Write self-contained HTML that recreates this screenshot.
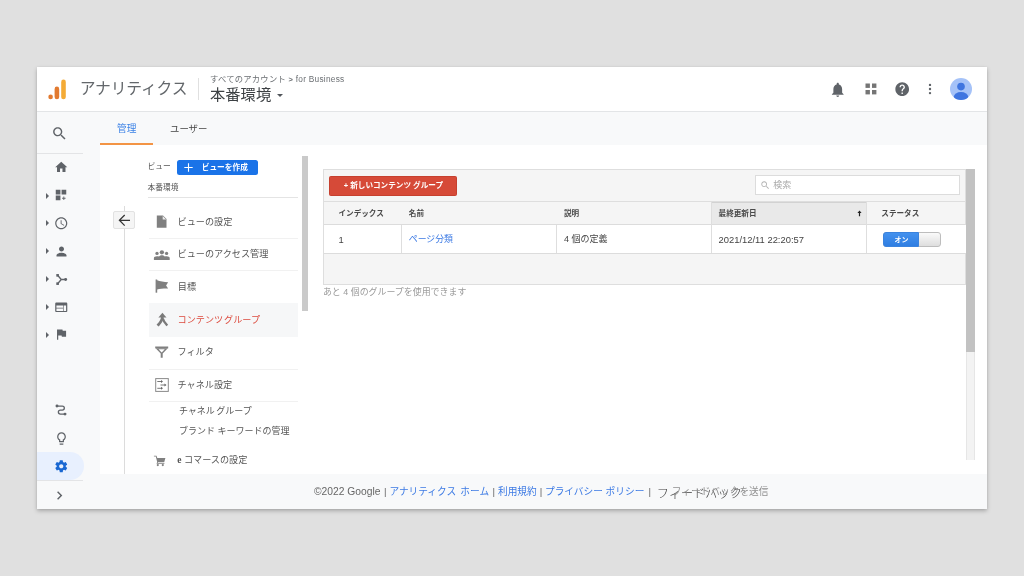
<!DOCTYPE html>
<html lang="ja">
<head>
<meta charset="utf-8">
<title>アナリティクス</title>
<style>
*{box-sizing:border-box;margin:0;padding:0}
html,body{width:1024px;height:576px;overflow:hidden;background:#e0e0e0;font-family:"Liberation Sans","Noto Sans CJK JP",sans-serif;color:#444}
.abs{position:absolute}
#win{position:absolute;left:37px;top:67px;width:950px;height:441.5px;background:#f8f9fa;box-shadow:0 2px 4px rgba(0,0,0,.25),0 0 2px rgba(0,0,0,.05);overflow:hidden}
#hdr{position:absolute;left:0;top:0;width:950px;height:45px;background:#fff;border-bottom:1px solid #e3e5e7}
#panel{position:absolute;left:63px;top:78px;width:887px;height:329px;background:#fff}
#foot{position:absolute;left:0;top:407px;width:950px;height:34px;background:#f8f9fa}
svg{position:absolute;display:block}
.t{position:absolute;white-space:nowrap;line-height:1;will-change:opacity}
</style>
</head>
<body>
<div id="win">
  <div id="hdr">
    <svg style="left:9.700px;top:11px" width="22" height="23" viewBox="0 0 22 23">
      <rect x="14.2" y="1.6" width="4.6" height="19.6" rx="2.3" fill="#f4ab36"/>
      <rect x="7.6" y="8.6" width="4.6" height="12.6" rx="2.3" fill="#e27a30"/>
      <circle cx="3.6" cy="18.9" r="2.3" fill="#e27a30"/>
    </svg>
    <div class="t" style="left:42.800px;top:14.400px;font-size:15.800px;color:#63676b;letter-spacing:-.2px">アナリティクス</div>
    <div class="abs" style="left:161px;top:11px;width:1px;height:22px;background:#e0e0e0"></div>
    <div class="t" style="left:173px;top:8px;font-size:8.300px;color:#6a6e72;letter-spacing:.25px">すべてのアカウント <b style="font-size:7.5px">&gt;</b> for Business</div>
    <div class="t" style="left:173px;top:20px;font-size:15.300px;color:#3c4043">本番環境</div>
    <div class="abs" style="left:240px;top:26.500px;width:0;height:0;border-left:3.400px solid transparent;border-right:3.400px solid transparent;border-top:3.600px solid #50545a"></div>
    <svg style="left:792px;top:13.5px" width="17.5" height="17.5" viewBox="0 0 24 24"><path fill="#5f6368" d="M12 22c1.1 0 2-.9 2-2h-4c0 1.1.89 2 2 2zm6-6v-5c0-3.07-1.64-5.64-4.5-6.32V4c0-.83-.67-1.5-1.5-1.5s-1.5.67-1.5 1.5v.68C7.63 5.36 6 7.92 6 11v5l-2 2v1h16v-1l-2-2z"/></svg>
    <svg style="left:828.400px;top:16.200px" width="12" height="12" viewBox="0 0 12 12"><g fill="#757575"><rect x="0.5" y="0.5" width="4.4" height="4.4"/><rect x="7" y="0.5" width="4.4" height="4.4"/><rect x="0.5" y="7" width="4.4" height="4.4"/><rect x="7" y="7" width="4.4" height="4.4"/></g></svg>
    <svg style="left:857px;top:14px" width="16.4" height="16.4" viewBox="0 0 24 24"><path fill="#5f6368" d="M12 2C6.48 2 2 6.48 2 12s4.480 10 10 10 10-4.480 10-10S17.520 2 12 2zm1 17h-2v-2h2v2zm2.070-7.750l-.9.920C13.450 12.900 13 13.500 13 15h-2v-.5c0-1.100.450-2.100 1.170-2.830l1.240-1.260c.370-.360.590-.860.590-1.410 0-1.100-.9-2-2-2s-2 .9-2 2H8c0-2.210 1.790-4 4-4s4 1.790 4 4c0 .880-.360 1.680-.930 2.250z"/></svg>
    <svg style="left:890px;top:15px" width="6" height="14" viewBox="0 0 6 14"><g fill="#5f6368"><circle cx="3" cy="2.900" r="1.2"/><circle cx="3" cy="7" r="1.2"/><circle cx="3" cy="11.100" r="1.2"/></g></svg>
    <svg style="left:912.500px;top:11.300px" width="22" height="22" viewBox="0 0 23 23"><defs><clipPath id="av"><circle cx="11.500" cy="11.500" r="11.500"/></clipPath></defs><circle cx="11.500" cy="11.500" r="11.500" fill="#a5c2f8"/><g clip-path="url(#av)" fill="#3f75e0"><circle cx="11.500" cy="9" r="4"/><ellipse cx="11.500" cy="19.500" rx="7.500" ry="4.800"/></g></svg>
  </div>
  <div id="nav" style="position:absolute;left:0;top:0;z-index:3">
  <svg style="left:14.0px;top:57.5px" width="17" height="17" viewBox="0 0 24 24"><path fill="#5f6368" d="M15.5 14h-.79l-.28-.27C15.41 12.59 16 11.11 16 9.5 16 5.91 13.09 3 9.5 3S3 5.91 3 9.5 5.91 16 9.5 16c1.61 0 3.09-.59 4.23-1.57l.27.28v.79l5 4.99L20.49 19l-4.99-5zm-6 0C7.010 14 5 11.990 5 9.500S7.010 5 9.500 5 14 7.010 14 9.500 11.990 14 9.500 14z"/></svg>
  <div class="abs" style="left:0;top:86px;width:46px;height:1px;background:#e3e4e6"></div>
  <svg style="left:16.8px;top:93.1px" width="14.5" height="14.5" viewBox="0 0 24 24"><path fill="#5f6368" d="M10 20v-6h4v6h5v-8h3L12 3 2 12h3v8z"/></svg>
  <svg style="left:17.0px;top:121.4px" width="14" height="14" viewBox="0 0 24 24"><path fill="#5f6368" d="M3 3h8v8H3zm10 0h8v8h-8zM3 13h8v8H3zm14.600 1.600h-1.500v2.200h-2.200v1.500h2.200v2.200h1.500v-2.200h2.200v-1.500h-2.200z"/></svg>
  <svg style="left:16.8px;top:148.8px" width="14.5" height="14.5" viewBox="0 0 24 24"><path fill="#5f6368" d="M11.990 2C6.470 2 2 6.480 2 12s4.470 10 9.990 10C17.520 22 22 17.520 22 12S17.520 2 11.990 2zM12 20c-4.420 0-8-3.580-8-8s3.580-8 8-8 8 3.580 8 8-3.580 8-8 8zm.5-13H11v6l5.250 3.150.75-1.230-4.500-2.670z"/></svg>
  <svg style="left:16.5px;top:176.5px" width="15" height="15" viewBox="0 0 24 24"><path fill="#5f6368" d="M12 12c2.210 0 4-1.790 4-4s-1.790-4-4-4-4 1.790-4 4 1.790 4 4 4zm0 2c-2.670 0-8 1.340-8 4v2h16v-2c0-2.660-5.330-4-8-4z"/></svg>
  <svg style="left:17.5px;top:205.5px" width="13" height="13" viewBox="0 0 15 15"><g stroke="#5f6368" stroke-width="1.500" fill="none"><path d="M3 2.600L7.200 7.500H12.500M3 12.400L7.200 7.500"/></g><g fill="#5f6368"><rect x="1.500" y="1.200" width="3" height="3"/><rect x="1.500" y="10.800" width="3" height="3"/><circle cx="12.300" cy="7.500" r="1.700"/></g></svg>
  <svg style="left:16.8px;top:232.8px" width="14.5" height="14.5" viewBox="0 0 24 24"><path fill="#5f6368" d="M20 4H4c-1.100 0-1.990.9-1.990 2L2 18c0 1.100.9 2 2 2h16c1.100 0 2-.9 2-2V6c0-1.100-.9-2-2-2zm-5 14H4v-4h11v4zm0-5H4V9h11v4zm5 5h-4V9h4v9z"/></svg>
  <svg style="left:16.8px;top:260.2px" width="14.5" height="14.5" viewBox="0 0 24 24"><path fill="#5f6368" d="M14.400 6L14 4H5v17h2v-7h5.600l.4 2h7V6z"/></svg>
  <div class="abs" style="left:8.600px;top:125.7px;width:0;height:0;border-top:3.1px solid transparent;border-bottom:3.1px solid transparent;border-left:3.600px solid #5f6368"></div>
  <div class="abs" style="left:8.600px;top:153.3px;width:0;height:0;border-top:3.1px solid transparent;border-bottom:3.1px solid transparent;border-left:3.600px solid #5f6368"></div>
  <div class="abs" style="left:8.600px;top:181.3px;width:0;height:0;border-top:3.1px solid transparent;border-bottom:3.1px solid transparent;border-left:3.600px solid #5f6368"></div>
  <div class="abs" style="left:8.600px;top:209.3px;width:0;height:0;border-top:3.1px solid transparent;border-bottom:3.1px solid transparent;border-left:3.600px solid #5f6368"></div>
  <div class="abs" style="left:8.600px;top:237.3px;width:0;height:0;border-top:3.1px solid transparent;border-bottom:3.1px solid transparent;border-left:3.600px solid #5f6368"></div>
  <div class="abs" style="left:8.600px;top:264.8px;width:0;height:0;border-top:3.1px solid transparent;border-bottom:3.1px solid transparent;border-left:3.600px solid #5f6368"></div>
  <svg style="left:17px;top:336.400px" width="14" height="14" viewBox="0 0 16 16"><path d="M3.500 3.500H9.500a2.300 2.300 0 0 1 0 4.600H7.300a2.300 2.300 0 0 0 0 4.600H12.300" stroke="#5f6368" stroke-width="1.500" fill="none"/><circle cx="3.400" cy="3.500" r="1.700" fill="#5f6368"/><circle cx="12.600" cy="12.700" r="1.700" fill="#5f6368"/></svg>
  <svg style="left:16.5px;top:364.1px" width="15" height="15" viewBox="0 0 24 24"><path fill="#5f6368" d="M9 21c0 .55.45 1 1 1h4c.55 0 1-.45 1-1v-1H9v1zm3-19C8.140 2 5 5.140 5 9c0 2.380 1.190 4.470 3 5.740V17c0 .55.45 1 1 1h6c.55 0 1-.45 1-1v-2.260c1.810-1.270 3-3.360 3-5.740 0-3.860-3.140-7-7-7zm2.850 11.100l-.85.6V16h-4v-2.300l-.85-.6C7.800 12.160 7 10.630 7 9c0-2.760 2.240-5 5-5s5 2.240 5 5c0 1.630-.8 3.160-2.150 4.100z"/></svg>
  <div class="abs" style="left:0;top:385px;width:46.500px;height:28px;background:#e8f0fe;border-radius:0 14px 14px 0"></div>
  <svg style="left:16.8px;top:391.8px" width="14.5" height="14.5" viewBox="0 0 24 24"><path fill="#1967d2" d="M19.430 12.980c.04-.32.07-.64.07-.98s-.03-.66-.07-.98l2.110-1.650c.19-.15.24-.42.120-.64l-2-3.460c-.12-.22-.39-.3-.61-.22l-2.490 1c-.52-.4-1.080-.73-1.690-.98l-.38-2.650C14.460 2.180 14.250 2 14 2h-4c-.25 0-.46.180-.49.420l-.38 2.650c-.61.250-1.170.590-1.690.980l-2.490-1c-.23-.09-.49 0-.61.220l-2 3.460c-.13.220-.07.490.120.640l2.110 1.650c-.04.320-.07.650-.07.980s.03.660.07.980l-2.110 1.650c-.19.150-.24.420-.12.640l2 3.460c.12.220.39.300.61.220l2.490-1c.52.400 1.080.730 1.690.980l.38 2.650c.03.240.24.420.49.420h4c.25 0 .46-.18.490-.42l.38-2.650c.61-.25 1.170-.59 1.690-.98l2.490 1c.23.090.49 0 .61-.22l2-3.460c.12-.22.07-.49-.12-.64l-2.110-1.650zM12 15.500c-1.930 0-3.500-1.570-3.500-3.500s1.570-3.500 3.500-3.500 3.500 1.570 3.500 3.500-1.570 3.500-3.500 3.500z"/></svg>
  <div class="abs" style="left:0;top:413px;width:46px;height:1px;background:#e3e4e6"></div>
  <svg style="left:14.1px;top:420.1px" width="17" height="17" viewBox="0 0 24 24"><path fill="#5f6368" d="M10 6L8.590 7.410 13.170 12l-4.580 4.590L10 18l6-6z"/></svg>
  </div>
  <div id="tabs">
    <div class="t" style="left:80px;top:56.500px;font-size:9.700px;color:#3b82e6">管理</div>
    <div class="t" style="left:133px;top:56.500px;font-size:9.400px;color:#444">ユーザー</div>
    <div class="abs" style="left:63px;top:76.400px;width:53px;height:2px;background:#f39445"></div>
  </div>
  <div id="panel">
    <div id="admin">
    <div class="t" style="left:47.4px;top:18.3px;font-size:7.8px;color:#555;">ビュー</div>
    <div class="abs" style="left:77.200px;top:15.300px;width:81px;height:14.700px;background:#1a73e8;border-radius:2.500px"></div>
    <svg style="left:84.300px;top:18.300px" width="9" height="9" viewBox="0 0 9 9"><path d="M4.500 0.300V8.700M0.300 4.500H8.700" stroke="#fff" stroke-width="1.100"/></svg>
    <div class="t" style="left:101.7px;top:18.8px;font-size:7.7px;color:#fff;font-weight:bold">ビューを作成</div>
    <div class="t" style="left:47.6px;top:38.7px;font-size:7.7px;color:#555;">本番環境</div>
    <div class="abs" style="left:48.0px;top:51.5px;width:150.0px;height:1px;background:#e4e4e4"></div>
    <div class="abs" style="left:202px;top:11.200px;width:6.100px;height:155.200px;background:#cacaca"></div>
    <div class="abs" style="left:23.700px;top:61px;width:1px;height:268px;background:#dcdcdc"></div>
    <div class="abs" style="left:13.200px;top:66.200px;width:22.300px;height:18.200px;background:#f5f5f5;border:1px solid #e2e2e2;border-radius:2px"></div>
    <div class="abs" style="left:49px;top:157.800px;width:148.500px;height:33.900px;background:#f6f7f8"></div>
    <div class="abs" style="left:49.0px;top:93.2px;width:148.5px;height:1px;background:#f1f1f1"></div>
    <div class="abs" style="left:49.0px;top:125.3px;width:148.5px;height:1px;background:#f1f1f1"></div>
    <div class="abs" style="left:49.0px;top:224.0px;width:148.5px;height:1px;background:#f1f1f1"></div>
    <div class="abs" style="left:49.0px;top:256.4px;width:148.5px;height:1px;background:#f1f1f1"></div>
    <div class="t" style="left:77.5px;top:72.7px;font-size:9.15px;color:#555;">ビューの設定</div>
    <div class="t" style="left:77.5px;top:105.2px;font-size:9.15px;color:#555;">ビューのアクセス管理</div>
    <div class="t" style="left:77.8px;top:137.9px;font-size:9.15px;color:#555;">目標</div>
    <div class="t" style="left:77.5px;top:171.0px;font-size:9.15px;color:#dc4b3e;word-spacing:-1.600px">コンテンツ グループ</div>
    <div class="t" style="left:77.5px;top:203.3px;font-size:9.15px;color:#555;">フィルタ</div>
    <div class="t" style="left:77.5px;top:236.1px;font-size:9.15px;color:#555;">チャネル設定</div>
    <div class="t" style="left:78.9px;top:262.3px;font-size:9.0px;color:#555;word-spacing:-1px">チャネル グループ</div>
    <div class="t" style="left:78.9px;top:282.0px;font-size:9.0px;color:#555;">ブランド キーワードの管理</div>
    <div class="t" style="left:77.2px;top:311.4px;font-size:9.15px;color:#555;"><b style="font-family:'Liberation Serif',serif;font-size:9.500px">e</b> コマースの設定</div>
    
    <svg style="left:0;top:0" width="887" height="329" viewBox="100 145 887 329">
      <g fill="none" stroke="#333" stroke-width="1.250"><path d="M130 220.300H119.500M124.700 215L119.400 220.300 124.700 225.600"/></g>
      <path fill="#808080" d="M156.800 215.600H163L166.500 219.100V227.700H156.800Z"/><path fill="#fff" d="M162.700 216V219.500H166.200Z" opacity=".85"/>
      <g fill="#808080"><circle cx="161.900" cy="252.300" r="2.150"/><circle cx="157" cy="253.400" r="1.650"/><circle cx="166.600" cy="253.400" r="1.650"/>
      <path d="M153.900 260V258C153.900 256.900 155.200 256.200 157 256.200 157.800 256.200 158.500 256.300 159 256.500 159.800 255.700 160.800 255.200 161.900 255.200 163 255.200 164 255.700 164.800 256.500 165.300 256.300 166 256.200 166.700 256.200 168.500 256.200 169.700 256.900 169.700 258V260Z"/></g>
      <g fill="#808080"><rect x="155.600" y="279.500" width="1.600" height="13.200"/><path d="M157 280.200C160 281.300 164 281.900 168.100 282.300L166.100 285.500 168.100 288.600C164 288.500 160 288.800 157 289.400Z"/></g>
      <g fill="none" stroke="#7a7a7a" stroke-linecap="butt"><path d="M162.400 316.500C162.400 321 160 323 157.600 325.600" stroke-width="2.700"/><path d="M162.800 318.500C163.500 321.500 165.500 323.500 167.300 325.600" stroke-width="2.300"/></g>
      <path d="M162.400 312.800L166.500 317.600H158.400Z" fill="#7a7a7a"/>
      <g fill="#808080"><rect x="155.200" y="346.500" width="13" height="1.900"/><path d="M155.600 348.200H167.800L162.700 353.600V357.800H160.700V353.600Z"/></g><path d="M158.600 349.300H164.800L161.700 352.500Z" fill="#fff"/>
      <rect x="155.700" y="378.600" width="12.600" height="12.800" fill="#fff" stroke="#8a8a8a" stroke-width="1"/>
      <g stroke="#666" stroke-width=".9" fill="none"><path d="M157.300 381.500H161.500M160.500 385H165M157.300 388.300H161.500"/></g>
      <g fill="#666"><path d="M161 380L163 381.500 161 383ZM164.500 383.500L166.500 385 164.500 386.500ZM161 386.800L163 388.300 161 389.800Z"/></g>
      <g fill="#808080"><path d="M153.900 455.800H156.500L157.300 457.900H165.400L164.200 462.200H158.100L157.700 463H164.400V463.700H156.500L157.200 462 155.800 456.600H153.900Z"/><circle cx="157.800" cy="465.100" r="1.100"/><circle cx="162.800" cy="465.100" r="1.100"/></g>
    </svg>
    </div>
    <div id="main">
    <div class="abs" style="left:223.0px;top:24.0px;width:643.0px;height:116.0px;background:#f5f5f5;border:1px solid #dedede"></div>
    <div class="abs" style="left:229.0px;top:31.0px;width:128.0px;height:19.7px;background:#d64a38;border-radius:1.500px;border:1px solid #c6402f"></div>
    <div class="t" style="left:243.7px;top:36.8px;font-size:7.6px;color:#fff;font-weight:bold">+ 新しいコンテンツ グループ</div>
    <div class="abs" style="left:655.2px;top:30.2px;width:205.1px;height:20px;background:#fff;border:1px solid #dcdcdc"></div>
    <svg style="left:659.6px;top:35.400000000000006px" width="10.500" height="10.500" viewBox="0 0 24 24"><path fill="#b0b0b0" d="M15.500 14h-.79l-.28-.27C15.410 12.590 16 11.110 16 9.500 16 5.910 13.090 3 9.500 3S3 5.910 3 9.500 5.910 16 9.500 16c1.610 0 3.090-.59 4.230-1.570l.27.280v.79l5 4.990L20.490 19l-4.990-5zm-6 0C7.010 14 5 11.990 5 9.500S7.010 5 9.500 5 14 7.010 14 9.500 11.990 14 9.500 14z"/></svg>
    <div class="t" style="left:673.3px;top:35.9px;font-size:9px;color:#aaa;">検索</div>
    <div class="abs" style="left:224.0px;top:56.0px;width:642.0px;height:1.0px;background:#dedede"></div>
    <div class="abs" style="left:611px;top:57.0px;width:155px;height:22.5px;background:#e9e9e9;border-top:1px solid #d2d2d2"></div>
    <div class="abs" style="left:224.0px;top:79.2px;width:642.0px;height:1.0px;background:#dcdcdc"></div>
    <div class="abs" style="left:224.0px;top:80.2px;width:642.0px;height:27.8px;background:#fff"></div>
    <div class="abs" style="left:224.0px;top:108.0px;width:642.0px;height:1.0px;background:#dcdcdc"></div>
    <div class="abs" style="left:301.0px;top:80.2px;width:1.0px;height:27.8px;background:#dedede"></div>
    <div class="abs" style="left:456.0px;top:80.2px;width:1.0px;height:27.8px;background:#dedede"></div>
    <div class="abs" style="left:611px;top:80.2px;width:1.0px;height:27.8px;background:#dedede"></div>
    <div class="abs" style="left:766px;top:80.2px;width:1.0px;height:27.8px;background:#dedede"></div>
    <div class="abs" style="left:766px;top:57.0px;width:1.0px;height:23.0px;background:#dedede"></div>
    <div class="abs" style="left:611px;top:57.0px;width:1.0px;height:23.0px;background:#dedede"></div>
    <div class="t" style="left:238.5px;top:64.7px;font-size:7.6px;color:#4a4a4a;font-weight:bold">インデックス</div>
    <div class="t" style="left:308.8px;top:64.7px;font-size:7.6px;color:#4a4a4a;font-weight:bold">名前</div>
    <div class="t" style="left:464.0px;top:64.7px;font-size:7.6px;color:#4a4a4a;font-weight:bold">説明</div>
    <div class="t" style="left:618.6px;top:64.7px;font-size:7.6px;color:#4a4a4a;font-weight:bold">最終更新日</div>
    <svg style="left:757px;top:65px" width="5" height="7" viewBox="0 0 5 7"><path d="M2.500 0.500L4.600 3H3.100V6.300H1.900V3H0.400Z" fill="#222"/></svg>
    <div class="t" style="left:781.3px;top:64.7px;font-size:7.6px;color:#4a4a4a;font-weight:bold">ステータス</div>
    <div class="t" style="left:238.5px;top:90.0px;font-size:9.4px;color:#444;">1</div>
    <div class="t" style="left:308.8px;top:90.1px;font-size:8.9px;color:#3c7ae4;">ページ分類</div>
    <div class="t" style="left:464.0px;top:90.0px;font-size:9.0px;color:#444;">4 個の定義</div>
    <div class="t" style="left:618.6px;top:90.1px;font-size:9.4px;color:#444;">2021/12/11 22:20:57</div>
    <div class="abs" style="left:783.2px;top:87.0px;width:57.4px;height:15.0px;background:linear-gradient(#fafafa,#dedede);border:1px solid #bdbdbd;border-radius:3px"></div>
    <div class="abs" style="left:783.2px;top:87.0px;width:35.8px;height:15.0px;background:linear-gradient(#4391ee,#2f7ee2);border:1px solid #3a83de;border-radius:3px 0 0 3px"></div>
    <div class="t" style="left:794.6px;top:91.0px;font-size:7px;color:#fff;font-weight:bold">オン</div>
    <div class="t" style="left:222.9px;top:143.1px;font-size:8.95px;color:#9a9a9a;">あと 4 個のグループを使用できます</div>
    <div class="abs" style="left:866.0px;top:24.0px;width:9.0px;height:183.0px;background:#c2c2c2"></div>
    <div class="abs" style="left:866.0px;top:207.0px;width:9.0px;height:108.0px;background:#f3f3f3;border-left:1px solid #e6e6e6;border-right:1px solid #e6e6e6"></div>
    </div>
  </div>
  <div id="foot">
    <div class="t" id="f1" style="left:277px;top:12.6px;font-size:10.3px;color:#666">©2022 Google</div>
    <div class="t"  style="left:347.0px;top:12.8px;font-size:9.7px;color:#666;">|</div>
    <div class="t" id="f2" style="left:352.4px;top:12.8px;font-size:9.7px;color:#3c7ae4;;word-spacing:1.500px">アナリティクス ホーム</div>
    <div class="t"  style="left:455.5px;top:12.8px;font-size:9.7px;color:#666;">|</div>
    <div class="t" id="f3" style="left:461.0px;top:12.8px;font-size:9.7px;color:#3c7ae4;">利用規約</div>
    <div class="t"  style="left:502.7px;top:12.8px;font-size:9.7px;color:#666;">|</div>
    <div class="t" id="f4" style="left:508.0px;top:12.8px;font-size:9.7px;color:#3c7ae4;">プライバシー ポリシー</div>
    <div class="t"  style="left:611.6px;top:12.8px;font-size:9.7px;color:#666;">|</div>
    <div class="t" id="f5" style="left:619.8px;top:14.2px;font-size:12.2px;color:#3c3c3c;font-weight:300">フィードバック</div>
    <div class="t" id="f6" style="left:634.8px;top:13.4px;font-size:9.7px;color:#909090">フィードバックを送信</div>
  </div>
</div>
</body>
</html>
